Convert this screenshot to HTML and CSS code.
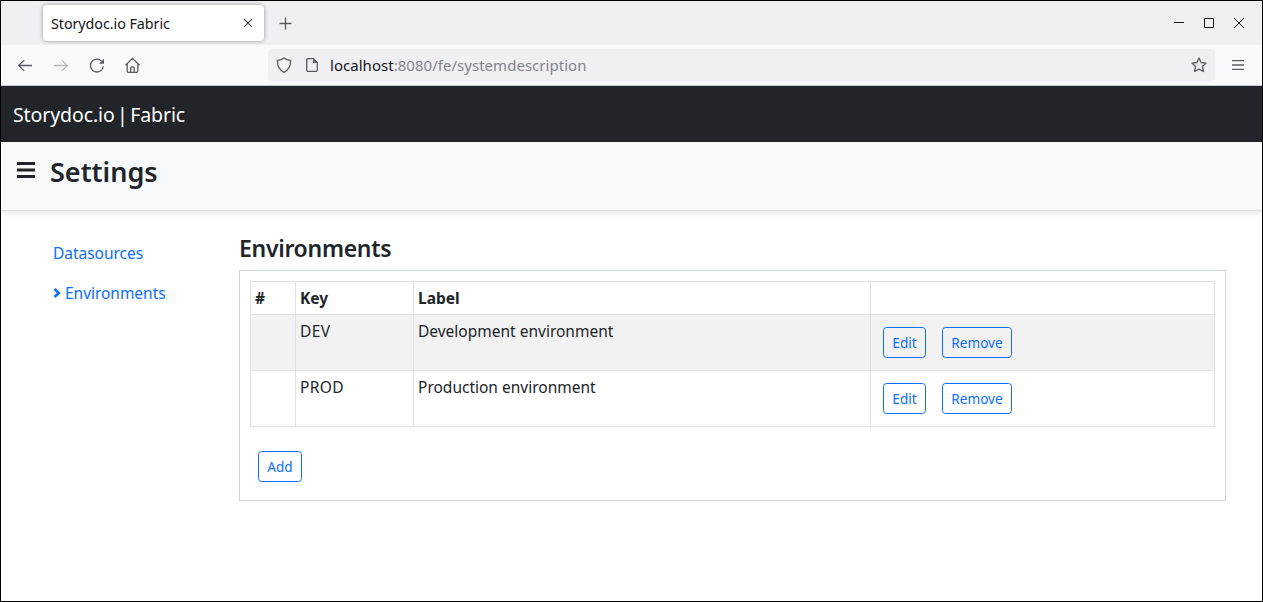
FILE: index.html
```html
<!DOCTYPE html>
<html lang="en">
<head>
<meta charset="utf-8">
<title>Storydoc.io Fabric</title>
<link rel="stylesheet" href="styles.css">
</head>
<body>
<div class="window">
  <div class="tabstrip">
    <div class="tab">
      <span class="tab-title">Storydoc.io Fabric</span>
      <svg class="tab-close" width="10" height="10" viewBox="0 0 10 10"><path d="M1.2 1.2l7.6 7.6M8.8 1.2L1.2 8.8"/></svg>
    </div>
    <svg class="new-tab" width="13" height="13" viewBox="0 0 13 13"><path d="M6.5.5v12M.5 6.5h12"/></svg>
    <div class="window-controls">
      <svg width="10" height="10" viewBox="0 0 10 10"><path d="M0 4.5h10"/></svg>
      <svg width="10" height="10" viewBox="0 0 10 10"><path d="M.5.5h9v9h-9z"/></svg>
      <svg width="10" height="10" viewBox="0 0 10 10"><path d="M0 0l10 10M10 0L0 10"/></svg>
    </div>
  </div>
  <div class="toolbar">
    <div class="nav-icons">
      <svg width="16" height="16" viewBox="0 0 16 16"><path d="M15 8.5H1.6M7.2 3.1L1.6 8.5l5.6 5.4"/></svg>
      <svg class="disabled" width="16" height="16" viewBox="0 0 16 16"><path d="M1 8.5h13.4M8.8 3.1l5.6 5.4-5.6 5.4"/></svg>
      <svg width="16" height="16" viewBox="0 0 16 16"><path d="M12.5 4.1A6.4 6.4 0 1 0 14.3 9.2"/><path class="solid" d="M15 1.7v5H10z"/></svg>
      <svg width="16" height="16" viewBox="0 0 16 16"><path d="M.5 8.2L7.5 1.3l7 6.9M2.2 6.7v7.3q0 1.3 1.3 1.3h8q1.3 0 1.3-1.3V6.7M5.7 15.3v-4.1q0-1.3 1.3-1.3h1q1.3 0 1.3 1.3v4.1"/></svg>
    </div>
    <div class="urlbar">
      <svg width="16" height="16" viewBox="0 0 16 16"><path d="M8 .9C9.8 2.3 12 3.1 14.6 3.3 14.8 8.5 13 12.9 8 15.3 3 12.9 1.2 8.5 1.4 3.3 4 3.1 6.2 2.3 8 .9z"/></svg>
      <svg class="page" width="12" height="14" viewBox="0 0 12 14"><path d="M2 .7h5.6l3.7 3.7V12q0 1.3-1.3 1.3H2Q.7 13.3.7 12V2Q.7.7 2 .7z"/><path class="solid" d="M7 .7v4.4h4.7z"/></svg>
      <span class="url"><span class="host">localhost</span>:8080/fe/systemdescription</span>
      <svg class="star" width="16" height="16" viewBox="0 0 16 16"><path stroke-linejoin="round" d="M8 1l2.1 4.5 5 .6-3.7 3.4 1 5L8 12.1l-4.4 2.4 1-5L.9 6.1l5-.6z"/></svg>
    </div>
    <svg class="menu" width="12" height="10" viewBox="0 0 12 10"><path d="M0 .6h12M0 5h12M0 9.4h12"/></svg>
  </div>
  <nav class="brandbar"><span class="brand">Storydoc.io | Fabric</span></nav>
  <header class="pagehead">
    <svg width="18" height="16" viewBox="0 0 18 16"><path d="M0 1.5h18M0 8h18M0 14.5h18"/></svg>
    <h1>Settings</h1>
  </header>
  <div class="content">
    <aside class="sidebar">
      <a class="link-data">Datasources</a>
      <a class="link-env"><svg width="8" height="10" viewBox="0 0 8 10"><path d="M1.5 1L5.8 5 1.5 9"/></svg>Environments</a>
    </aside>
    <main class="main">
      <h2>Environments</h2>
      <section class="panel">
        <table>
          <colgroup><col class="c-num"><col class="c-key"><col class="c-label"><col></colgroup>
          <thead><tr><th>#</th><th>Key</th><th>Label</th><th></th></tr></thead>
          <tbody>
            <tr class="striped"><td></td><td class="key">DEV</td><td>Development environment</td><td><div class="actions"><button class="edit">Edit</button><button class="remove">Remove</button></div></td></tr>
            <tr><td></td><td class="key">PROD</td><td>Production environment</td><td><div class="actions"><button class="edit">Edit</button><button class="remove">Remove</button></div></td></tr>
          </tbody>
        </table>
        <button class="add">Add</button>
      </section>
    </main>
  </div>
</div>
</body>
</html>
```
FILE: styles.css
```css
* { box-sizing: border-box; }
body { margin: 0; font: 15.5px/24px "Noto Sans", sans-serif; color: #212529; background: #fff; }
svg { display: block; flex: none; fill: none; stroke: #5b5b66; stroke-width: 1.3; }
svg .solid { fill: #5b5b66; stroke: none; }
span, a, h1, h2 { white-space: nowrap; }
.window { width: 1263px; height: 602px; border: 1px solid #000; overflow: hidden; }

.tabstrip { display: flex; align-items: center; height: 44px; padding-left: 42px; background: #f0eff4; }
.tab { display: flex; align-items: center; justify-content: space-between; width: 221px; height: 36px; padding: 0 11px 0 8px; border-radius: 4px; background: #fff; box-shadow: 0 0 4px rgba(0,0,0,.4); }
.tab-title { padding-top: 1px; font-size: 14.3px; letter-spacing: -.05px; color: #15141a; }
.tab-close { stroke: #3a3944; stroke-width: 1.1; }
.new-tab { margin: 1px 0 0 15px; stroke-width: 1.3; }
.window-controls { display: flex; gap: 20px; margin-left: auto; padding-right: 18px; }
.window-controls svg { stroke: #15141a; stroke-width: 1; }

.toolbar { display: flex; align-items: center; height: 41px; padding: 0 17px 0 16px; background: #f9f9fb; border-bottom: 1px solid #ccc; }
.nav-icons { display: flex; gap: 20px; width: 251px; }
.disabled { opacity: .4; }
.urlbar { display: flex; align-items: center; width: 947px; height: 32px; padding: 0 8px; border-radius: 4px; background: #f0eff4; }
.page { margin-left: 14px; }
.url { margin-left: 12px; font-size: 15px; letter-spacing: .03px; color: #85848b; }
.host { color: #15141a; }
.star { margin-left: auto; }
.menu { margin-left: auto; stroke-width: 1.4; margin-right: 1px; }

.brandbar { display: flex; align-items: center; height: 56px; padding: 2px 12px 0; background: #212529; color: #fff; font-size: 19.5px; word-spacing: -2.5px; letter-spacing: -.1px; }
.pagehead { display: flex; align-items: flex-start; gap: 15px; height: 69px; padding: 20px 16px 0; background: #f8f9fb; border-bottom: 1px solid #dee0e2; box-shadow: 0 2px 6px rgba(0,0,0,.1); }
.pagehead svg { stroke: #212529; stroke-width: 2.8; }
h1, h2 { margin: 0; font-weight: 600; }
h1 { margin-top: -7px; font-size: 27px; line-height: 34px; }

.content { display: flex; padding: 23px 36px 0 52px; }
.sidebar { display: flex; flex-direction: column; gap: 16px; width: 186px; padding-top: 7px; color: #0d6efd; letter-spacing: -.03px; }
.link-env { display: flex; align-items: center; gap: 4px; }
.link-env svg { stroke: #0d6efd; stroke-width: 2.5; }
.main { flex: 1; }
h2 { height: 36px; font-size: 23px; line-height: 29px; letter-spacing: -.3px; }
.panel { height: 231px; padding: 10px; border: 1px solid #ced4da; }
table { width: 965px; table-layout: fixed; border-collapse: collapse; }
.c-num { width: 45px; }
.c-key { width: 118px; }
.c-label { width: 457px; }
th, td { height: 33px; padding: 4px; border: 1px solid #dee2e6; text-align: left; vertical-align: top; }
th { font-weight: 700; }
tbody td { height: 56px; }
.key { letter-spacing: .4px; }
.striped { background: #f2f2f2; }
.actions { display: flex; gap: 16px; padding: 8px; }
button { height: 31px; padding: 0; border: 1px solid #0d6efd; border-radius: 3.5px; background: transparent; color: #0d6efd; font: 13.6px/21px "Noto Sans", sans-serif; }
.edit { width: 43px; }
.remove { width: 70px; }
.add { display: block; width: 44px; margin: 24px 0 0 8px; }
```
